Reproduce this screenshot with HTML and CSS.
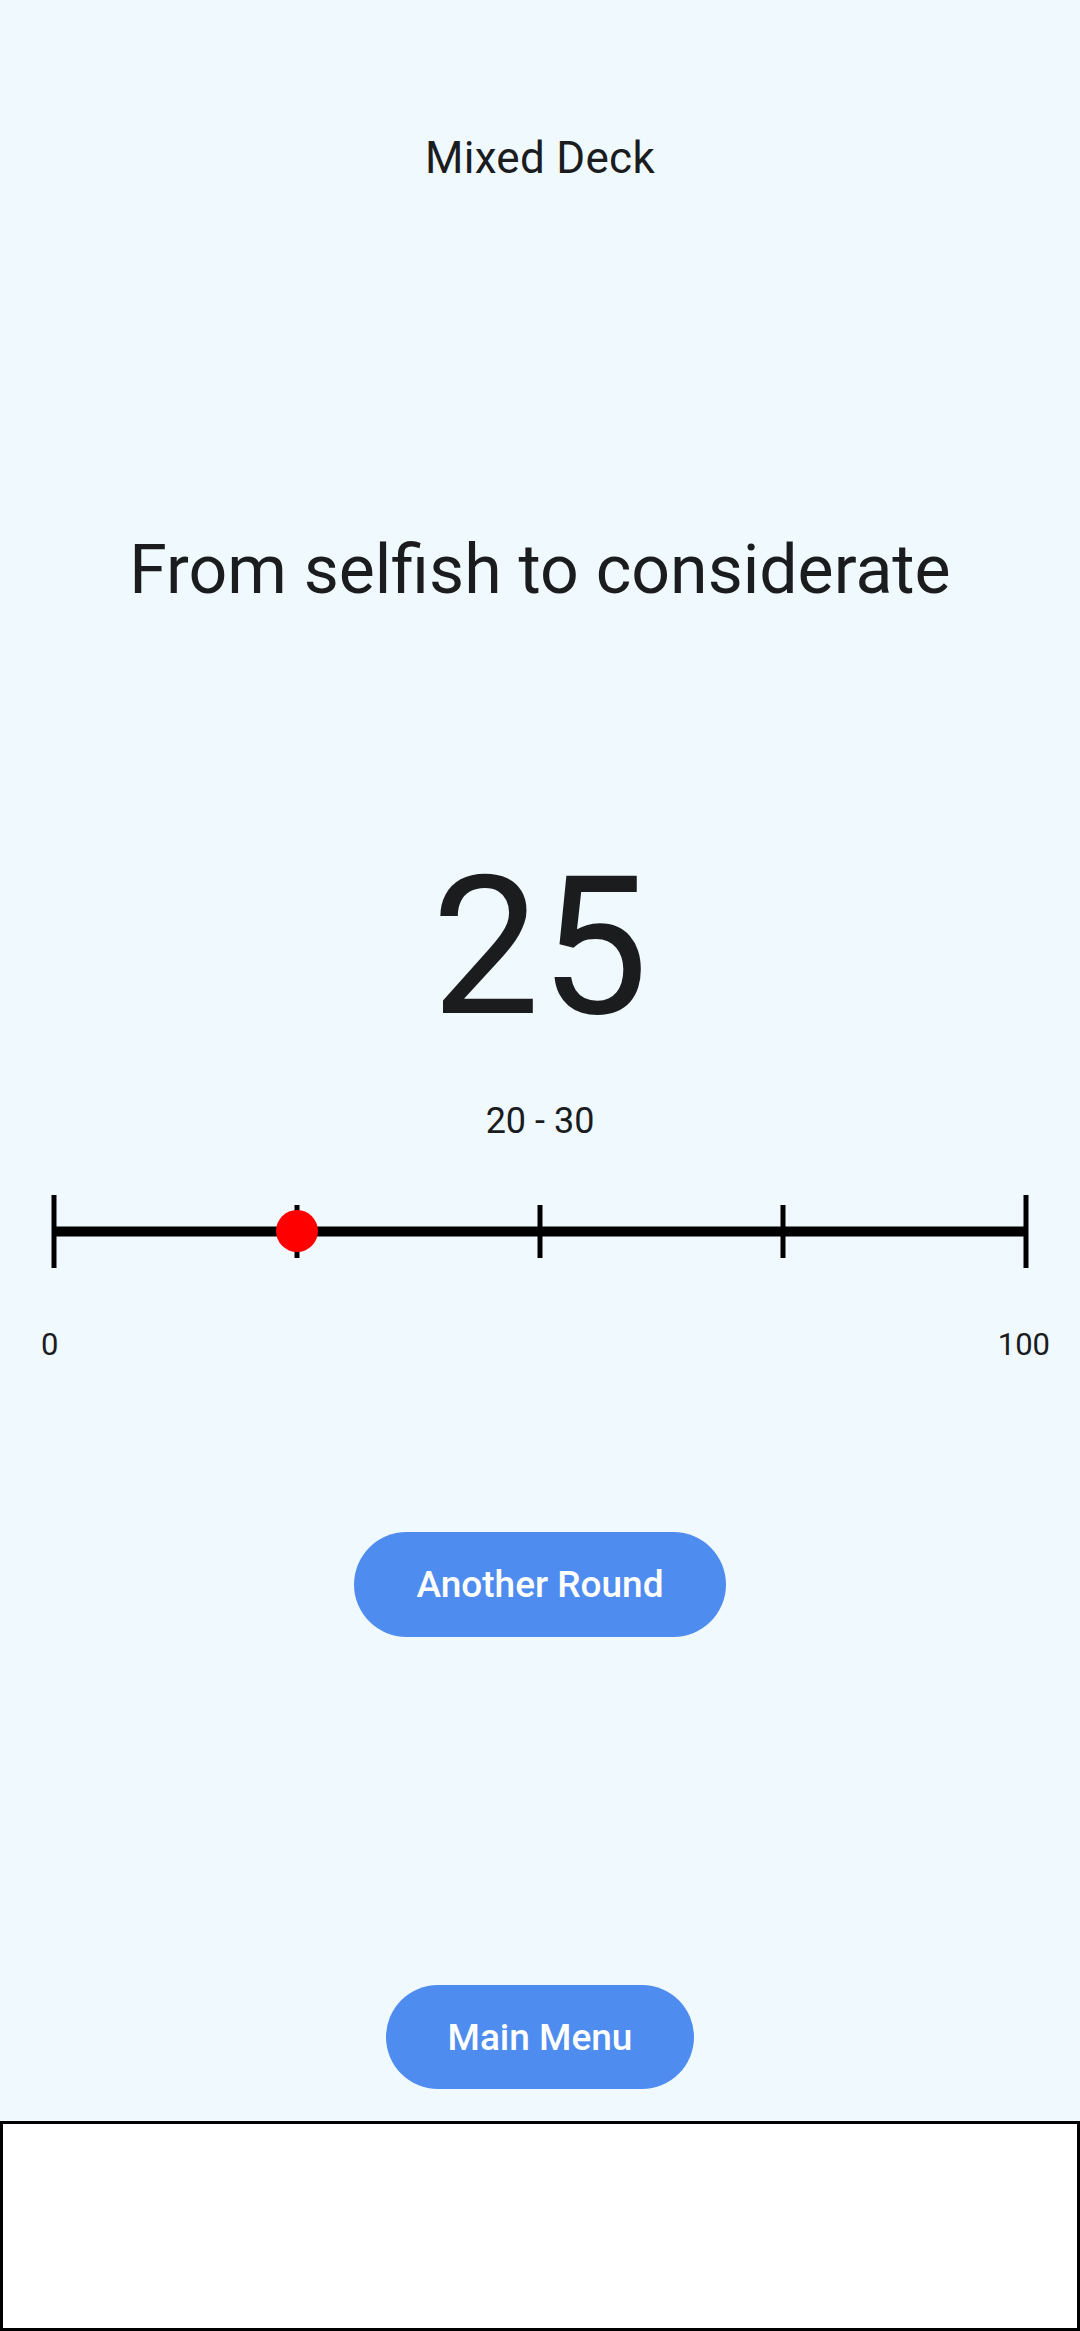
FILE: index.html
```html
<!DOCTYPE html>
<html lang="en">
<head>
    <meta charset="UTF-8">
    <meta name="viewport" content="width=device-width, initial-scale=1.0">
    <title>Mixed Deck</title>
    <link rel="stylesheet" href="styles.css">
</head>
<body>
    <div class="screen">
        <h2 class="deck-name">Mixed Deck</h2>
        <h1 class="prompt">From selfish to considerate</h1>

        <div class="score">25</div>
        <div class="range">20 - 30</div>

        <svg class="scale" width="980" height="73" viewBox="0 0 980 73">
            <line x1="4" y1="36.5" x2="976" y2="36.5" stroke="#000" stroke-width="10"/>
            <line x1="4" y1="0" x2="4" y2="73" stroke="#000" stroke-width="5"/>
            <line x1="976" y1="0" x2="976" y2="73" stroke="#000" stroke-width="5"/>
            <line x1="247" y1="10" x2="247" y2="63" stroke="#000" stroke-width="5"/>
            <line x1="490" y1="10" x2="490" y2="63" stroke="#000" stroke-width="5"/>
            <line x1="733" y1="10" x2="733" y2="63" stroke="#000" stroke-width="5"/>
            <circle cx="247" cy="36" r="21" fill="#ff0000"/>
        </svg>

        <div class="scale-labels">
            <span>0</span>
            <span>100</span>
        </div>

        <button class="pill another">Another Round</button>
        <button class="pill menu">Main Menu</button>
    </div>
    <div class="ad-box"></div>
</body>
</html>
```

FILE: styles.css
```css
body {
    margin: 0;
    width: 1080px;
    height: 2331px;
    background-color: #f0f9fe;
    font-family: Roboto, "Noto Sans", sans-serif;
    color: #1a1c1e;
    overflow: hidden;
}

.screen {
    height: 2121px;
    display: flex;
    flex-direction: column;
    align-items: center;
}

.deck-name {
    margin: 136px 0 0;
    font-size: 44px;
    font-weight: 400;
    line-height: 1;
    letter-spacing: 0.3px;
}

.prompt {
    margin: 356px 0 0;
    font-size: 68px;
    font-weight: 400;
    line-height: 1;
}

.score {
    margin-top: 247px;
    font-size: 193px;
    line-height: 1;
}

.range {
    margin-top: 59px;
    font-size: 36px;
    line-height: 1;
}

.scale {
    display: block;
    margin-top: 56px;
}

.scale-labels {
    align-self: stretch;
    display: flex;
    justify-content: space-between;
    margin-top: 61px;
    padding: 0 30px 0 41px;
    font-size: 31px;
    line-height: 1;
}

.pill {
    display: flex;
    align-items: center;
    justify-content: center;
    height: 105px;
    padding: 0 62px;
    border: none;
    border-radius: 53px;
    background-color: #4f8cef;
    color: #fff;
    font-family: Roboto, "Noto Sans", sans-serif;
    font-size: 37px;
    font-weight: 500;
}

.another {
    margin-top: 172px;
}

.menu {
    margin-top: 348px;
    height: 104px;
}

.ad-box {
    height: 210px;
    box-sizing: border-box;
    border: 3px solid #000;
    background-color: #fff;
}
```
